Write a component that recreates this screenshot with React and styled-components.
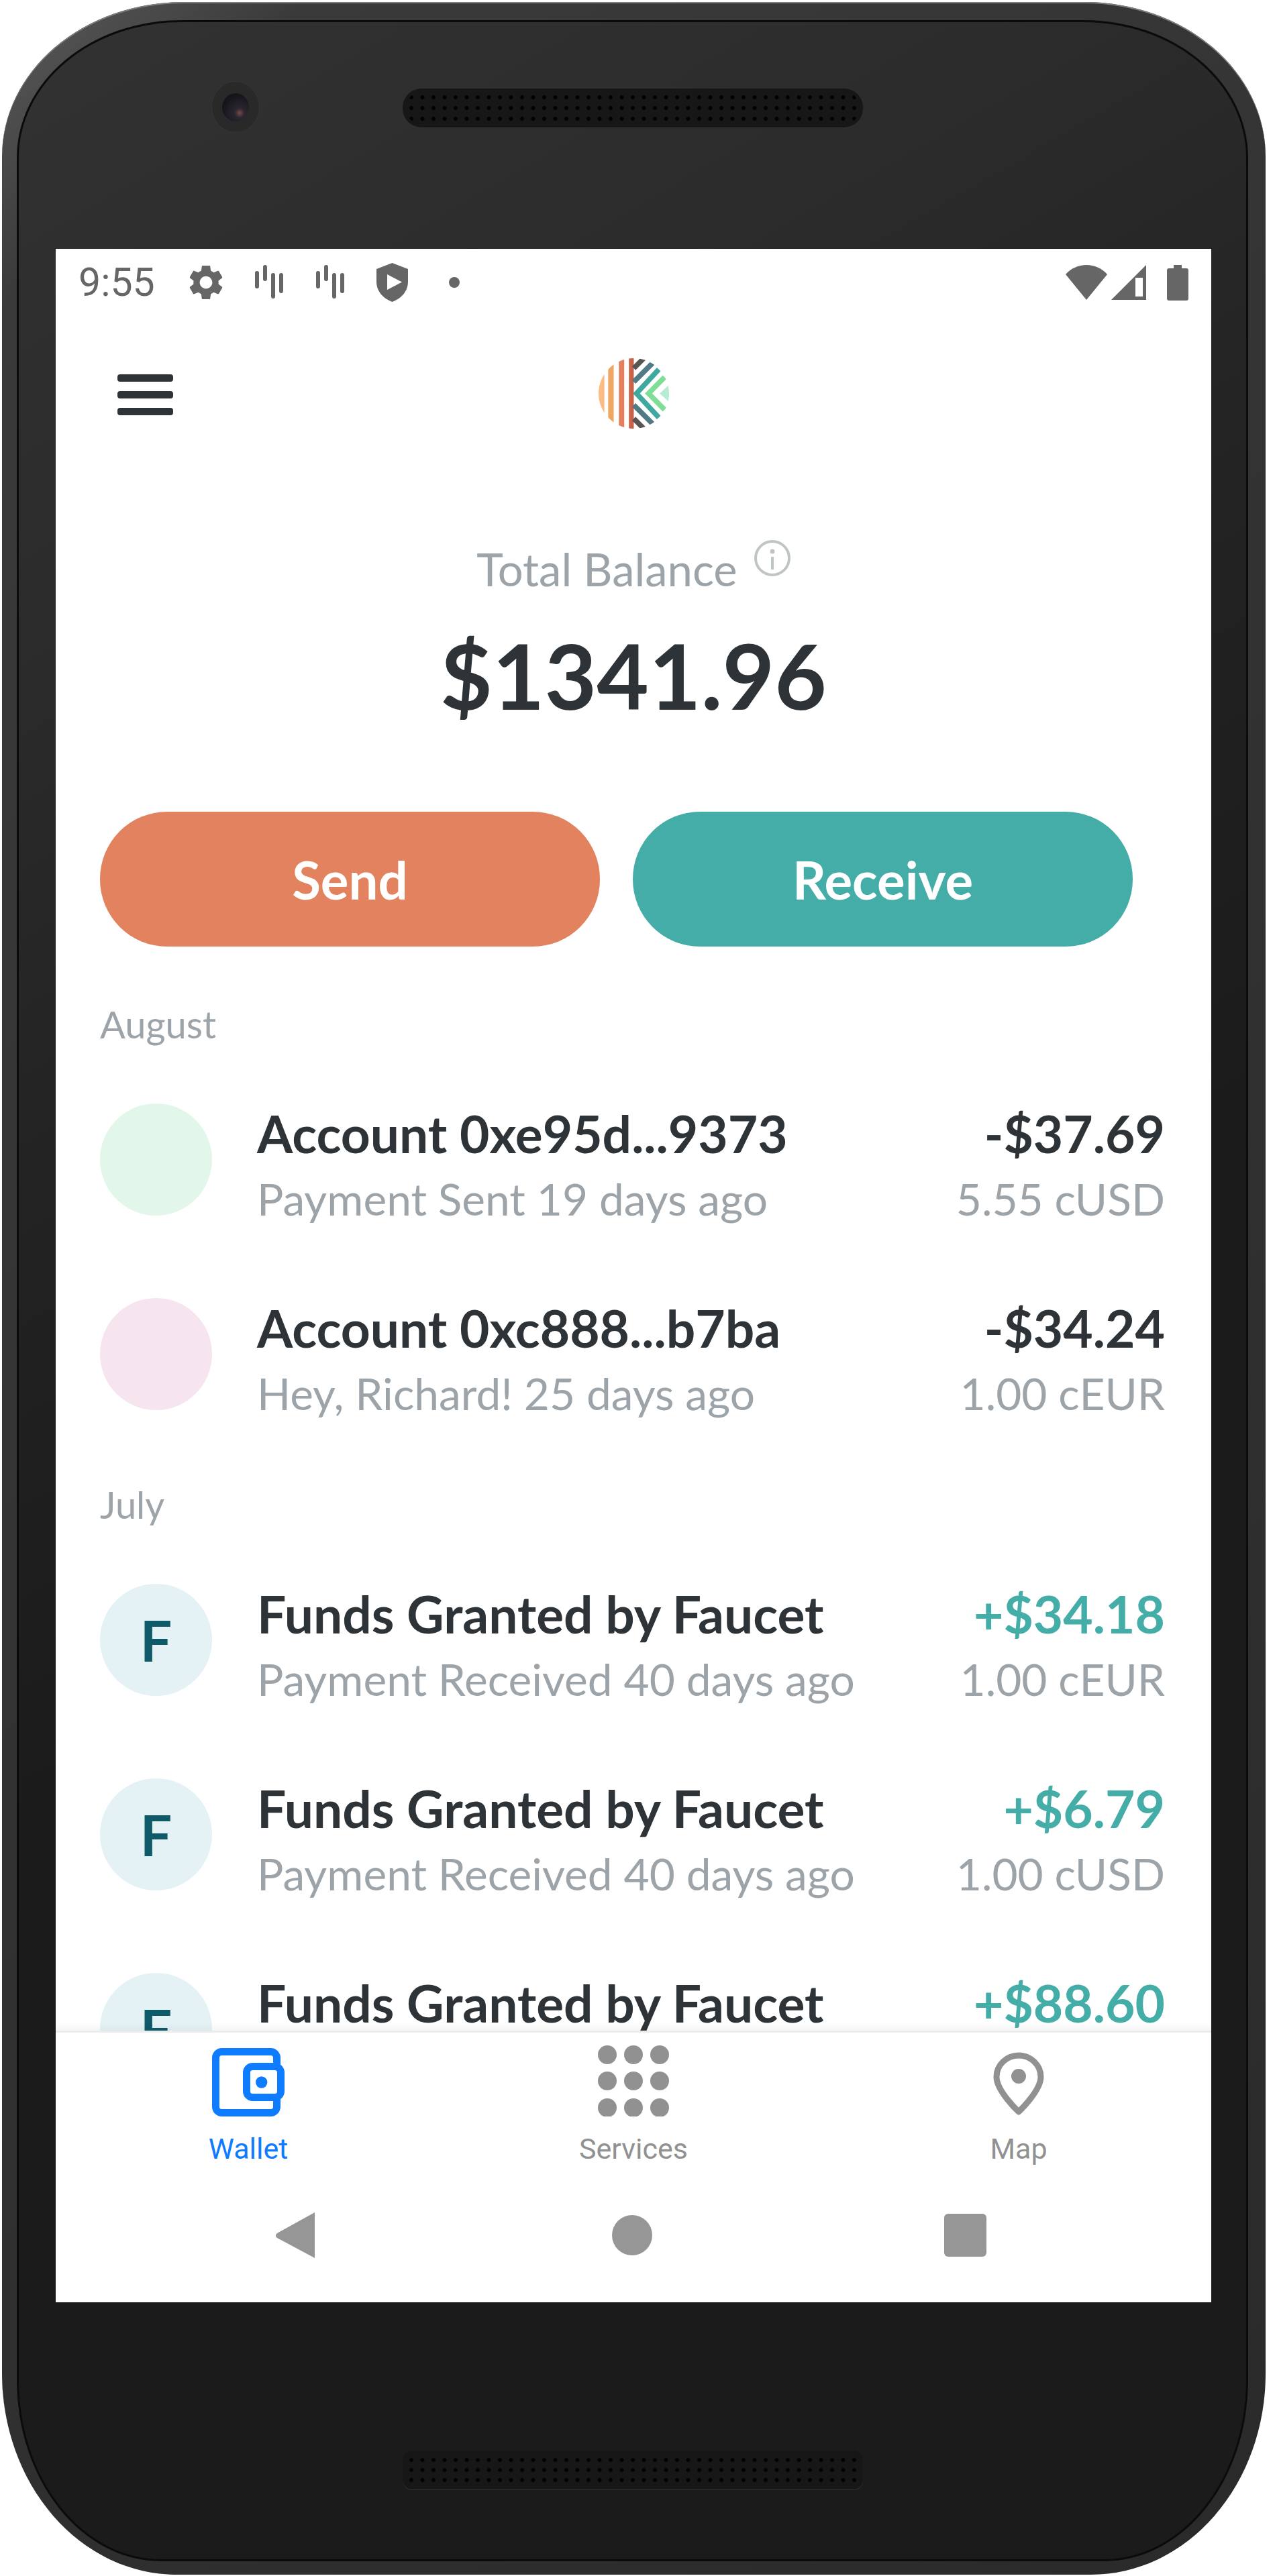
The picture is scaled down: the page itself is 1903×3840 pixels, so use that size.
import React from "react";
import styled, { createGlobalStyle } from "styled-components";

const months = [
  {
    name: "August",
    rows: [
      { title: "Account 0xe95d...9373", sub: "Payment Sent 19 days ago", amount: "-$37.69", token: "5.55 cUSD", tint: "#e3f6ea" },
      { title: "Account 0xc888...b7ba", sub: "Hey, Richard! 25 days ago", amount: "-$34.24", token: "1.00 cEUR", tint: "#f6e4ef" },
    ],
  },
  {
    name: "July",
    rows: [
      { title: "Funds Granted by Faucet", sub: "Payment Received 40 days ago", amount: "+$34.18", token: "1.00 cEUR", tint: "#e4f2f6", letter: "F", credit: true },
      { title: "Funds Granted by Faucet", sub: "Payment Received 40 days ago", amount: "+$6.79", token: "1.00 cUSD", tint: "#e4f2f6", letter: "F", credit: true },
      { title: "Funds Granted by Faucet", sub: "Payment Received 40 days ago", amount: "+$88.60", token: "1.00 cUSD", tint: "#e4f2f6", letter: "F", credit: true },
    ],
  },
];

const GEAR =
  "M19.14,12.94c0.04-0.3,0.06-0.61,0.06-0.94c0-0.32-0.02-0.64-0.07-0.94l2.03-1.58c0.18-0.14,0.23-0.41,0.12-0.61l-1.92-3.32c-0.12-0.22-0.37-0.29-0.59-0.22l-2.39,0.96c-0.5-0.38-1.03-0.7-1.62-0.94L14.4,2.81c-0.04-0.24-0.24-0.41-0.48-0.41h-3.84c-0.24,0-0.43,0.17-0.47,0.41L9.25,5.35C8.66,5.59,8.12,5.92,7.63,6.29L5.24,5.33c-0.22-0.08-0.47,0-0.59,0.22L2.74,8.87C2.62,9.08,2.66,9.34,2.86,9.48l2.03,1.58C4.84,11.36,4.8,11.69,4.8,12s0.02,0.64,0.07,0.94l-2.03,1.58c-0.18,0.14-0.23,0.41-0.12,0.61l1.92,3.32c0.12,0.22,0.37,0.29,0.59,0.22l2.39-0.96c0.5,0.38,1.03,0.7,1.62,0.94l0.36,2.54c0.05,0.24,0.24,0.41,0.48,0.41h3.84c0.24,0,0.44-0.17,0.47-0.41l0.36-2.54c0.59-0.24,1.13-0.56,1.62-0.94l2.39,0.96c0.22,0.08,0.47,0,0.59-0.22l1.92-3.32c0.12-0.22,0.07-0.47-0.12-0.61L19.14,12.94z M12,15.6c-1.98,0-3.6-1.62-3.6-3.6s1.62-3.6,3.6-3.6s3.6,1.62,3.6,3.6S13.98,15.6,12,15.6z";

const GearIcon = () => (
  <StatusSvg $width={52} $height={52} $gap={50} viewBox="2 2 20 20" fill="#666">
    <path d={GEAR} />
  </StatusSvg>
);

const VibrateIcon = ({ gap }) => (
  <StatusSvg $width={44} $height={52} $gap={gap} viewBox="0 0 44 52" stroke="#666" strokeWidth="6" strokeLinecap="round">
    <path d="M4 12v20M16 3v18M28 15v32M40 15v24" />
  </StatusSvg>
);

const ShieldIcon = () => (
  <StatusSvg $width={47} $height={58} $gap={47} viewBox="0 0 47 58">
    <path d="M23.5 0L47 9v19c0 14-10 25-23.5 30C10 53 0 42 0 28V9z" fill="#666" />
    <path d="M16 17l22 11.500L16 40z" fill="#fff" />
  </StatusSvg>
);

const WifiIcon = () => (
  <StatusSvg $width={62} $height={52} $gap={0} viewBox="0 0 62 52" fill="#666">
    <path d="M31 52L0 14C8 5 19 0 31 0s23 5 31 14z" />
  </StatusSvg>
);

const SignalIcon = () => (
  <StatusSvg $width={52} $height={52} $gap={6} viewBox="0 0 52 52">
    <path d="M52 0v52H0z" fill="#666" />
    <path d="M36 19h11v28H36z" fill="#fff" />
  </StatusSvg>
);

const BatteryIcon = () => (
  <StatusSvg $width={32} $height={53} $gap={31} viewBox="0 0 32 53" fill="#666">
    <path d="M10 0h12v5h7a3 3 0 0 1 3 3v42a3 3 0 0 1-3 3H3a3 3 0 0 1-3-3V8a3 3 0 0 1 3-3h7z" />
  </StatusSvg>
);

const Logo = () => (
  <svg width="105" height="105" viewBox="92 100 316 316">
    <defs>
      <clipPath id="logo-disc">
        <circle cx="250" cy="258" r="158" />
      </clipPath>
    </defs>
    <g clipPath="url(#logo-disc)">
      <rect x="92" y="100" width="26" height="316" fill="#fdbb82" />
      <rect x="135" y="100" width="25" height="316" fill="#eea864" />
      <rect x="183" y="100" width="24" height="316" fill="#e47f60" />
      <rect x="228" y="100" width="22" height="316" fill="#c86249" />
      <g fill="none" strokeWidth="23">
        <path d="M250 145L300 95M250 371L300 421" stroke="#5a5555" />
        <path d="M250 206L335 121M250 310L335 395" stroke="#507a85" />
        <path d="M362 150L262 258L362 366" stroke="#3fa9a0" />
        <path d="M388 185L316 258L388 331" stroke="#80dd98" />
      </g>
      <path d="M408 220L366 258L408 296z" fill="#b7ebd2" />
    </g>
  </svg>
);

const InfoIcon = () => (
  <InfoSvg viewBox="0 0 54 54" fill="none" stroke="#bfc4c7" strokeWidth="4">
    <circle cx="27" cy="27" r="25" />
    <path d="M27 25v19" />
    <circle cx="27" cy="17" r="1.500" fill="#bfc4c7" />
  </InfoSvg>
);

const WalletIcon = () => (
  <svg width="108" height="102" viewBox="0 0 108 102" fill="#fff" stroke="#0f7bff" strokeWidth="11">
    <rect x="5.500" y="5.500" width="91" height="91" rx="9" />
    <rect x="51.500" y="27.500" width="51" height="46" rx="9" />
    <circle cx="73.700" cy="51" r="8.700" fill="#0f7bff" stroke="none" />
  </svg>
);

const ServicesIcon = () => (
  <svg width="108" height="106" viewBox="0 0 108 106" fill="#919191">
    {[14, 53, 93].map((y) =>
      [15, 54, 93].map((x) => <circle key={`${x}-${y}`} cx={x} cy={y} r="14" />)
    )}
  </svg>
);

const PinIcon = () => (
  <svg width="76" height="96" viewBox="0 0 76 96" fill="none" stroke="#919191" strokeWidth="9">
    <path d="M38 89C38 89 5 58 5 37a33 32 0 0 1 66 0C71 58 38 89 38 89z" strokeLinejoin="round" />
    <circle cx="38" cy="36" r="11" fill="#919191" stroke="none" />
  </svg>
);

const App = () => (
  <>
    <GlobalStyle />
    <Phone>
      <VolumeKey />
      <PowerKey />
      <Face>
        <TopBezel>
          <Camera>
            <Lens />
          </Camera>
          <Speaker />
        </TopBezel>
        <Screen>
          <StatusBar>
            <StatusTime>9:55</StatusTime>
            <GearIcon />
            <VibrateIcon gap={46} />
            <VibrateIcon gap={47} />
            <ShieldIcon />
            <StatusDot />
            <StatusRight>
              <WifiIcon />
              <SignalIcon />
              <BatteryIcon />
            </StatusRight>
          </StatusBar>

          <Header>
            <Burger>
              <span />
              <span />
              <span />
            </Burger>
            <Logo />
          </Header>

          <Balance>
            <BalanceLabel>
              Total Balance
              <InfoIcon />
            </BalanceLabel>
            <BalanceValue>$1341.96</BalanceValue>
          </Balance>

          <Actions>
            <ActionButton $color="#e3825e">Send</ActionButton>
            <ActionButton $color="#45ada8">Receive</ActionButton>
          </Actions>

          <Feed>
            {months.map((month) => (
              <section key={month.name}>
                <MonthLabel>{month.name}</MonthLabel>
                {month.rows.map((row, i) => (
                  <Row key={i}>
                    <Avatar $tint={row.tint}>{row.letter}</Avatar>
                    <RowText>
                      <RowTitle>{row.title}</RowTitle>
                      <RowSub>{row.sub}</RowSub>
                    </RowText>
                    <RowAmounts>
                      <RowTitle $credit={row.credit}>{row.amount}</RowTitle>
                      <RowSub>{row.token}</RowSub>
                    </RowAmounts>
                  </Row>
                ))}
              </section>
            ))}
          </Feed>

          <TabBar>
            <Tab $active>
              <TabIcon>
                <WalletIcon />
              </TabIcon>
              Wallet
            </Tab>
            <Tab>
              <TabIcon>
                <ServicesIcon />
              </TabIcon>
              Services
            </Tab>
            <Tab>
              <TabIcon>
                <PinIcon />
              </TabIcon>
              Map
            </Tab>
          </TabBar>

          <NavBar>
            <svg width="58" height="68" viewBox="0 0 58 68" fill="#969696">
              <path d="M58 0v68L2 38a4 4 0 0 1 0-7z" />
            </svg>
            <NavCircle />
            <NavSquare />
          </NavBar>
        </Screen>
        <BottomBezel>
          <Speaker $bottom />
        </BottomBezel>
      </Face>
    </Phone>
  </>
);

const GlobalStyle = createGlobalStyle`
  html, body {
    margin: 0;
    background: #fff;
    overflow: hidden;
  }
  * {
    box-sizing: border-box;
  }
`;

const Phone = styled.div`
  position: relative;
  width: 1883px;
  height: 3835px;
  margin: 3px 0 0 3px;
  padding: 27px 26px 20px 22px;
  border-radius: 270px 270px 260px 260px / 230px 230px 300px 300px;
  background: linear-gradient(135deg, #5a5a5a 0%, #3a3a3a 8%, #323232 50%, #2a2a2a 100%);
  box-shadow: inset 0 2px 0 #7c7c7c;
`;

const VolumeKey = styled.div`
  position: absolute;
  z-index: -1;
  top: 997px;
  right: -15px;
  width: 24px;
  height: 258px;
  border-radius: 0 6px 6px 0;
  background: linear-gradient(90deg, #555 0%, #6a6a6a 70%, #2e2e2e 100%);
`;

const PowerKey = styled.div`
  position: absolute;
  z-index: -1;
  top: 1519px;
  right: -10px;
  width: 20px;
  height: 570px;
  border-radius: 0 3px 3px 0;
  background: linear-gradient(90deg, #555 0%, #8e8e8e 60%, #777 100%);
`;

const Face = styled.div`
  width: 1835px;
  height: 3788px;
  border: 3px solid #0b0b0b;
  border-radius: 245px 245px 215px 215px / 205px 205px 270px 270px;
  background: linear-gradient(150deg, #323232 0%, #2b2b2b 20%, #232323 35%, #1b1b1b 55%, #1b1b1c 100%);
`;

const TopBezel = styled.div`
  position: relative;
  display: flex;
  justify-content: center;
  height: 338px;
  padding-top: 99px;
`;

const BottomBezel = styled.div`
  display: flex;
  justify-content: center;
  padding-top: 221px;
`;

const Speaker = styled.div`
  width: 686px;
  height: 58px;
  border-radius: ${(p) => (p.$bottom ? "14px" : "28px")};
  background-color: #171717;
  background-image: radial-gradient(circle at center, #020202 2.600px, transparent 3.400px);
  background-size: 16.500px ${(p) => (p.$bottom ? "15px" : "16px")};
  background-position: center;
  box-shadow: inset 0 0 0 5px #171717, 0 1px 0 #333;
`;

const Camera = styled.div`
  position: absolute;
  left: 288px;
  top: 89px;
  display: flex;
  align-items: center;
  justify-content: center;
  width: 70px;
  height: 75px;
  border-radius: 50%;
  background: #292929;
  box-shadow: 0 0 0 1px #353535;
`;

const Lens = styled.div`
  width: 40px;
  height: 42px;
  border-radius: 50%;
  background: radial-gradient(circle at 65% 70%, #7a4a4a 0, #2b2630 18%, #15141a 70%);
`;

const Screen = styled.div`
  display: flex;
  flex-direction: column;
  width: 1722px;
  height: 3061px;
  margin-left: 55px;
  background: #fff;
  font-family: Lato, "Open Sans", sans-serif;
`;

const StatusBar = styled.div`
  display: flex;
  flex-shrink: 0;
  align-items: center;
  height: 100px;
  padding: 0 34px 0 34px;
`;

const StatusTime = styled.span`
  font-family: Roboto, sans-serif;
  font-size: 59px;
  line-height: 60px;
  color: #666;
`;

const StatusSvg = styled.svg.attrs((p) => ({ width: p.$width, height: p.$height }))`
  flex-shrink: 0;
  margin-left: ${(p) => p.$gap}px;
`;

const StatusDot = styled.span`
  width: 16px;
  height: 16px;
  margin-left: 61px;
  border-radius: 50%;
  background: #666;
`;

const StatusRight = styled.div`
  display: flex;
  align-items: center;
  margin-left: auto;
`;

const Header = styled.div`
  position: relative;
  display: flex;
  flex-shrink: 0;
  align-items: center;
  justify-content: center;
  height: 230px;
`;

const Burger = styled.div`
  position: absolute;
  left: 92px;
  top: 87px;
  display: flex;
  flex-direction: column;
  gap: 14px;
  span {
    width: 83px;
    height: 11px;
    border-radius: 4px;
    background: #2e3338;
  }
`;

const Balance = styled.div`
  display: flex;
  flex-direction: column;
  flex-shrink: 0;
  align-items: center;
  height: 509px;
  padding-top: 104px;
`;

const BalanceLabel = styled.div`
  display: flex;
  align-items: flex-start;
  gap: 25px;
  font-size: 67px;
  line-height: 86px;
  color: #9ca4a9;
`;

const InfoSvg = styled.svg`
  width: 54px;
  height: 54px;
`;

const BalanceValue = styled.div`
  margin-top: 36px;
  font-size: 134px;
  font-weight: 700;
  line-height: 160px;
  color: #2e3338;
`;

const Actions = styled.div`
  display: flex;
  flex-shrink: 0;
  gap: 49px;
  padding-left: 66px;
  margin-bottom: 36px;
`;

const ActionButton = styled.div`
  display: flex;
  align-items: center;
  justify-content: center;
  width: 745px;
  height: 201px;
  border-radius: 100px;
  background: ${(p) => p.$color};
  font-size: 78px;
  font-weight: 700;
  color: #fff;
`;

const Feed = styled.div`
  flex: 1;
  min-height: 0;
  overflow: hidden;
`;

const MonthLabel = styled.div`
  height: 136px;
  padding: 40px 0 0 66px;
  font-size: 56px;
  line-height: 80px;
  color: #9ca4a9;
`;

const Row = styled.div`
  display: flex;
  align-items: flex-start;
  height: 290px;
  padding: 62px 69px 0 66px;
`;

const Avatar = styled.div`
  display: flex;
  flex-shrink: 0;
  align-items: center;
  justify-content: center;
  width: 167px;
  height: 167px;
  margin-right: 67px;
  border-radius: 50%;
  background: ${(p) => p.$tint};
  font-size: 84px;
  font-weight: 700;
  color: #0e5a68;
`;

const RowText = styled.div`
  flex: 1;
  min-width: 0;
  margin-top: -5px;
  white-space: nowrap;
`;

const RowAmounts = styled.div`
  margin-top: -5px;
  text-align: right;
  white-space: nowrap;
`;

const RowTitle = styled.div`
  font-size: 76.700px;
  font-weight: 700;
  line-height: 98px;
  color: ${(p) => (p.$credit ? "#45ada8" : "#2e3338")};
`;

const RowSub = styled.div`
  font-size: 65.800px;
  line-height: 98px;
  color: #9ca4a9;
`;

const TabBar = styled.div`
  position: relative;
  display: grid;
  flex-shrink: 0;
  grid-template-columns: repeat(3, 1fr);
  height: 233px;
  padding-top: 19px;
  border-top: 3px solid #ececec;
  background: #fff;
  &::before {
    content: "";
    position: absolute;
    left: 0;
    right: 0;
    top: -15px;
    height: 12px;
    background: linear-gradient(transparent, rgba(0, 0, 0, 0.04));
  }
`;

const Tab = styled.div`
  display: flex;
  flex-direction: column;
  align-items: center;
  font-family: Roboto, sans-serif;
  font-size: 43px;
  line-height: 50px;
  color: ${(p) => (p.$active ? "#0f7bff" : "#919191")};
`;

const TabIcon = styled.div`
  display: flex;
  align-items: flex-end;
  height: 106px;
  margin-bottom: 23px;
`;

const NavBar = styled.div`
  display: flex;
  flex-shrink: 0;
  align-items: center;
  justify-content: center;
  gap: 443px;
  height: 172px;
  padding: 0 8px 29px 0;
  background: #fff;
`;

const NavCircle = styled.span`
  width: 60px;
  height: 60px;
  border-radius: 50%;
  background: #969696;
`;

const NavSquare = styled.span`
  width: 63px;
  height: 64px;
  margin-left: -8px;
  border-radius: 6px;
  background: #969696;
`;

export default App;
